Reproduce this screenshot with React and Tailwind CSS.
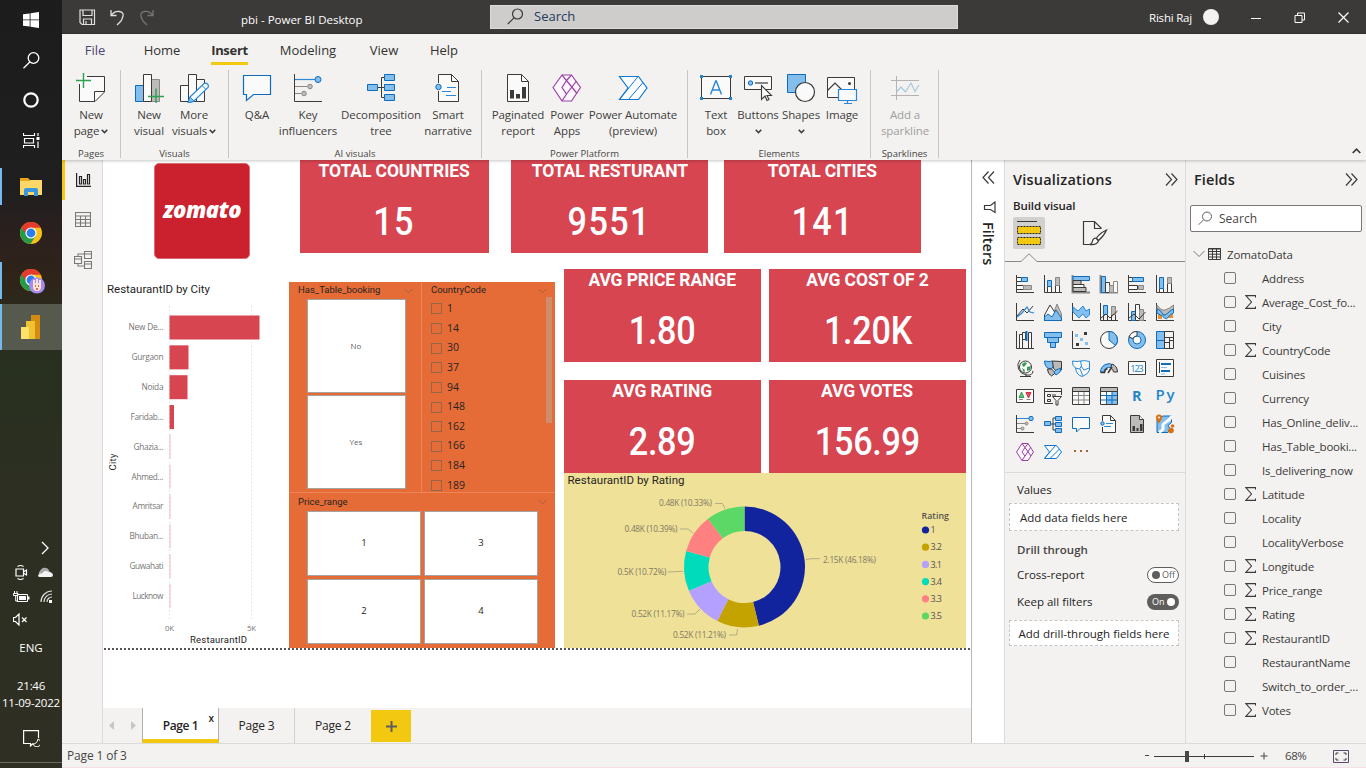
import React from "react";

const D = "#3b3a39";
const B = "#0f6cbd";
const L = "#83beec";
const G = "#bdbbb9";
const S = "#8a8886";

function Svg({ w = 18, h = w, children, className = "" }) {
  return (
    <svg width={w} height={h} viewBox={`0 0 ${w} ${h}`} fill="none" strokeWidth="1" className={`block shrink-0 ${className}`}>
      {children}
    </svg>
  );
}

/* ---------- Taskbar ---------- */

function ChromeLogo({ badge }) {
  return (
    <Svg w={28} h={26}>
      <circle cx="12" cy="12" r="11" fill="#fbc116" />
      <path d="M12 12L2.500 6.500A11 11 0 0 1 21.500 6.500H12Z" fill="#e33b2e" />
      <path d="M2.500 6.500A11 11 0 0 0 11.500 23L16.800 14.700 12 12Z" fill="#259a48" />
      <path d="M2.500 6.500L7.300 14.800 12 12V6.500Z" fill="#259a48" />
      <path d="M2.500 6.500A11 11 0 0 1 21.500 6.500H12L7.500 9.500 6.400 12.200Z" fill="#e33b2e" />
      <circle cx="12" cy="12" r="5.600" fill="#fff" />
      <circle cx="12" cy="12" r="4.400" fill="#2b7de9" />
      {badge && (
        <g>
          <circle cx="18" cy="17.500" r="8" fill="#a98bf0" />
          <path d="M15 12v7M18 11v6M21 12v7" stroke="#f1e6dc" strokeWidth="2" />
          <circle cx="18" cy="19" r="4" fill="#f6e5d3" />
          <path d="M16 18h1M19 18h1M17 21h2" stroke="#d2462f" strokeWidth="1.400" />
        </g>
      )}
    </Svg>
  );
}

function Taskbar() {
  return (
    <aside className="flex w-[62px] shrink-0 flex-col bg-[linear-gradient(#1c1c1c_0px,#1f1f1f_190px,#2b201e_235px,#2f2419_280px,#2a2c20_320px,#28301f_370px,#2c2f22_480px,#2f2f23_768px)] text-white">
      <div className="flex h-10 items-center justify-center">
        <Svg w={16}>
          <path d="M0 2.300L6.700 1.400V7.500H0ZM7.500 1.300L16 0V7.500H7.500ZM0 8.300H6.700V14.600L0 13.700ZM7.500 8.300H16V16L7.500 14.700Z" fill="#fff" />
        </Svg>
      </div>
      <div className="flex h-10 items-center justify-center">
        <Svg w={17}>
          <circle cx="10.500" cy="6" r="5.300" stroke="#fff" strokeWidth="1.300" />
          <path d="M6.800 10L.500 16.300" stroke="#fff" strokeWidth="1.300" />
        </Svg>
      </div>
      <div className="flex h-10 items-center justify-center">
        <Svg w={18}><circle cx="9" cy="9" r="6.700" stroke="#fff" strokeWidth="2.200" /></Svg>
      </div>
      <div className="flex h-10 items-center justify-center">
        <Svg w={17}>
          <path d="M.5 1v2.500h11V1M.5 16v-2.500h11V16M1.500 6.500h9v4.500h-9ZM15 1v3M15 9.500V16" stroke="#fff" strokeWidth="1.200" />
          <path d="M13.500 5h3v3h-3Z" fill="#fff" />
        </Svg>
      </div>
      <div className="mt-[3px] flex h-[47px] items-center">
        <div className="h-[37px] w-[2px] bg-[#76b9ed]" />
        <Svg w={22} h={18} className="ml-[18px]">
          <path d="M0 0h8l2 2h12v15H0Z" fill="#e9a51c" />
          <path d="M0 3h9l2-1h11v15H0Z" fill="#fdd868" />
          <path d="M4 18v-6a2 2 0 0 1 2-2h10a2 2 0 0 1 2 2v6h-4v-4H8v4Z" fill="#3a96dd" />
        </Svg>
      </div>
      <div className="flex h-[47px] items-center pl-[19px]"><ChromeLogo /></div>
      <div className="flex h-[47px] items-center">
        <div className="h-[37px] w-[2px] bg-[#76b9ed]" />
        <div className="ml-[17px]"><ChromeLogo badge /></div>
      </div>
      <div className="flex h-[46px] items-center bg-[#565a4e]">
        <div className="h-full w-[2px] bg-[#76b9ed]" />
        <Svg w={20} h={24} className="ml-[19px]">
          <path d="M10 0h9v24h-9Z" fill="#d58a10" />
          <path d="M5 6h9v18H5Z" fill="#efc22f" />
          <path d="M0 12h8v12H0Z" fill="#fbe06a" />
        </Svg>
      </div>
      <div className="mt-[191px] flex h-[14px] justify-end pr-[12px]">
        <Svg w={10} h={14}><path d="M2 1L8 7 2 13" stroke="#fff" strokeWidth="1.300" /></Svg>
      </div>
      <div className="mt-[8px] flex h-[18px] items-center pl-[15px]">
        <Svg w={13} h={17}>
          <path d="M1 5h7.500v7H1ZM9 7.500l2.500-1.500v5L9 9.500M2.500 2.500Q5.500.500 8.500 2.500M2.500 14.500Q5.500 16.500 8.500 14.500" stroke="#fff" strokeWidth="1.200" />
        </Svg>
        <Svg w={17} h={12} className="ml-[9px]">
          <path d="M3 10a3.500 3.500 0 0 1 0-5 5 5 0 0 1 8.500-1.500L14 8Z" fill="#a9a9a9" />
          <path d="M1 9.500Q2 7 5 7.500 8 3.500 11.500 6 15.500 6 16 9q0 2-2 2H3Q1 11 1 9.500Z" fill="#f3f3f3" />
        </Svg>
      </div>
      <div className="mt-[6px] flex h-[18px] items-center pl-[13px]">
        <Svg w={17} h={13}>
          <path d="M4.500 4.500h10v7h-10Z" stroke="#fff" />
          <path d="M6 6h7v4H6ZM15 6.500h1.500v3H15Z" fill="#fff" />
          <path d="M1.500 1v2M4 1v2M.5 3.500h4.500v2h-4.500ZM2.700 6v5h2" stroke="#fff" />
        </Svg>
        <Svg w={13} h={13} className="ml-[10px]">
          <path d="M1 12A11 11 0 0 1 12 1M4 12A8 8 0 0 1 12 4M7 12A5 5 0 0 1 12 7" stroke="#ddd" strokeWidth="1.200" />
          <path d="M9 10h3v3H9Z" fill="#fff" />
        </Svg>
      </div>
      <div className="mt-[6px] flex h-[16px] items-center pl-[13px]">
        <Svg w={15} h={13}><path d="M.5 4.500h2L6 1v11L2.500 8.500h-2ZM9 4.500l4.500 4.500M13.500 4.500L9 9" stroke="#fff" strokeWidth="1.200" /></Svg>
      </div>
      <div className="mt-[12px] flex h-[18px] items-center justify-center text-[11.500px]">ENG</div>
      <div className="mt-[20px] flex h-[17px] items-center justify-center text-[11.500px] tracking-[-0.3px]">21:46</div>
      <div className="flex h-[17px] items-center justify-center whitespace-nowrap text-[11.500px] tracking-[-0.2px]">11-09-2022</div>
      <div className="mt-[19px] flex h-[18px] justify-center">
        <Svg w={17}><path d="M10 13.500L7.500 16V13.500H.600V.600H15.500V8" stroke="#fff" strokeWidth="1.200" /><path d="M15 9a4 4 0 1 1-5 5q4 0 5-5Z" stroke="#fff" /></Svg>
      </div>
      <div className="mt-[14px] h-px bg-[#6a6b60]" />
    </aside>
  );
}

/* ---------- Title bar and ribbon ---------- */

function TitleBar() {
  return (
    <header className="flex h-[34px] shrink-0 items-center border-b border-[#33312f] bg-[#3b3a39] text-white">
      <Svg w={17} h={17} className="mt-[2px] ml-[17px]">
        <path d="M1 1h14.500v14.500H3L1 13.500ZM4 1v5.500h9V1M4.500 15v-5h8v5M7 12v3" stroke="#e1dfdd" strokeWidth="1.200" />
      </Svg>
      <Svg w={16} h={17} className="mt-[2px] ml-[14px]">
        <path d="M1 1v5.500h5.500M1.200 6.200Q5 1.500 9.500 2.500T13 7 11 12L7 16" stroke="#e1dfdd" strokeWidth="1.300" />
      </Svg>
      <Svg w={16} h={17} className="mt-[2px] ml-[13px]">
        <path d="M14 1v5.500H8.500M13.800 6.200Q10 1.500 5.500 2.500T2 7 4 12L8 16" stroke="#767472" strokeWidth="1.300" />
      </Svg>
      <div className="ml-[86px] w-[249px] whitespace-nowrap pt-[7px] text-[11.500px]">pbi - Power BI Desktop</div>
      <div className="flex h-6 w-[468px] items-center border border-[#dddbd9] bg-[#cfcdcb] text-[13px] text-[#243a5e]">
        <Svg w={17} h={17} className="ml-[16px]">
          <circle cx="10.500" cy="6" r="5" stroke="#3b3a39" strokeWidth="1.200" />
          <path d="M7 9.800L.800 16" stroke="#3b3a39" strokeWidth="1.200" />
        </Svg>
        <span className="ml-[10px] pt-px">Search</span>
      </div>
      <div className="ml-[191px] w-[54px] whitespace-nowrap pt-[2px] text-[11.500px] tracking-[-0.2px]">Rishi Raj</div>
      <div className="size-4 rounded-full bg-[#f3f2f1]" />
      <div className="mt-[3px] ml-[32px] h-px w-[10px] bg-white" />
      <Svg w={11} className="mt-[2px] ml-[33px]"><path d="M1 3.500h7v7H1ZM3.500 3.500V1h7v7H8" stroke="#fff" /></Svg>
      <Svg w={11} className="mt-[2px] ml-[33px]"><path d="M.5.500l10 10M10.500.500l-10 10" stroke="#fff" strokeWidth="1.200" /></Svg>
    </header>
  );
}

const icons = {
  newPage: (
    <Svg w={30}>
      <path d="M3 4h26v15L18.500 29H3Z" fill="#fafafa" />
      <path d="M11 3.500h17.500V19L19 28.500H3.500V11M28.500 18.500H18.500v10" stroke={D} />
      <path d="M0 7.500h15M7.500 0v15" stroke="#2f9e4f" strokeWidth="1.400" />
    </Svg>
  ),
  newVisual: (
    <Svg w={30}>
      <path d="M1.500 12.500h8v16h-8Z" fill={L} stroke={B} />
      <path d="M17.500 6.500h8v22h-8Z" fill={G} stroke={S} />
      <path d="M9.500 1.500h8v27h-8Z" fill="#fafafa" stroke={D} />
      <path d="M14 23.500h16M22 15.500v15" stroke="#2f9e4f" strokeWidth="1.400" />
    </Svg>
  ),
  moreVisuals: (
    <Svg w={30}>
      <path d="M1.500 12.500h8v16h-8ZM17.500 6.500h8v22h-8ZM9.500 1.500h8v27h-8Z" fill="#fafafa" stroke={D} />
      <path d="M11 24L25 10.500q2-1 3.500.5t.5 3.500L14.500 28.500 9 30Z" fill="#f5fafd" stroke="#2b88d8" strokeWidth="1.200" />
      <path d="M11 24l4 4-6 2ZM23 12.500l4 4" fill={L} stroke="#2b88d8" />
    </Svg>
  ),
  qa: <Svg w={30}><path d="M1.500 2.500h27v19H11.500L4.500 27.500v-6h-3Z" fill="#fafafa" stroke={B} strokeWidth="1.200" /></Svg>,
  key: (
    <Svg w={30}>
      <path d="M1.500 1v27.500H29" stroke={D} />
      <path d="M2 6.500h20" stroke="#2b88d8" strokeWidth="1.200" />
      <circle cx="25" cy="6.500" r="3" fill={L} stroke={B} />
      <path d="M2 13.500h12M2 20.500h6" stroke={S} />
      <circle cx="17" cy="13.500" r="2.300" fill={G} stroke={S} />
      <circle cx="11" cy="20.500" r="2.300" fill={G} stroke={S} />
    </Svg>
  ),
  tree: (
    <Svg w={30}>
      <path d="M11 14.500h7M18 4.500h-2.500v20H18" stroke={D} />
      <path d="M1.500 11.500h10v6h-10ZM18.500 1.500h10v6h-10ZM18.500 11.500h10v6h-10ZM18.500 21.500h10v6h-10Z" fill={L} stroke={B} />
    </Svg>
  ),
  smart: (
    <Svg w={30}>
      <path d="M5.500 10V1.500h13l7 7v20h-20V18" fill="#fafafa" stroke={D} />
      <path d="M18.500 1.500v7h7" stroke={D} />
      <circle cx="5.500" cy="14" r="2.700" fill={L} stroke={B} />
      <path d="M14 14.500h9M9 18.500h9M13 22.500h10" stroke="#2b88d8" />
    </Svg>
  ),
  report: (
    <Svg w={30}>
      <path d="M4.500 1.500h14l7 7v20h-21Z" fill="#fafafa" stroke={D} />
      <path d="M18.500 1.500v7h7" stroke={D} />
      <path d="M7 17h4v8.500H7ZM13 21h4v4.500h-4ZM19 14h4v11.500h-4Z" fill={D} />
    </Svg>
  ),
  apps: (
    <Svg w={30}>
      <path d="M10 2h9.500L28.500 14.500 19.500 28H10L1 14.500Z" fill="#fbf7fc" stroke="#9b3fa8" strokeWidth="1.200" strokeLinejoin="round" />
      <path d="M10 2L14.500 7.500 10 14.500 14.500 21 10 28M14.500 7.500L19.500 2M14.500 7.500l10.500 13M14.500 21L24.500 8" stroke="#9b3fa8" strokeWidth="1.200" />
    </Svg>
  ),
  automate: (
    <Svg w={30}>
      <path d="M1.500 3.500h19L29 15l-8.500 11.500h-19L10 15Z" fill="#fbfdff" stroke="#0f78d4" strokeWidth="1.200" />
      <path d="M1.500 26.500L16 8.500 20 3.500M10.500 26.500L25 9.500" stroke="#0f78d4" />
    </Svg>
  ),
  textBox: (
    <Svg w={32} h={30}>
      <path d="M1.500 3.500h29v22h-29Z" fill="#fafafa" stroke={D} />
      <path d="M0 2h3v3H0ZM29 2h3v3h-3ZM0 24h3v3H0ZM29 24h3v3h-3Z" fill="#1f87d0" />
      <path d="M10.500 21.500L15.700 8h.6L21.500 21.500M12.200 17h7.600" stroke="#2b88d8" strokeWidth="1.400" />
    </Svg>
  ),
  buttons: (
    <Svg w={30}>
      <path d="M1.500 3.500h27v13h-27Z" fill="#fafafa" stroke={D} />
      <circle cx="7.500" cy="10" r="2.200" fill={L} stroke={B} />
      <path d="M12 10h13" stroke={D} strokeWidth="1.200" />
      <path d="M18.500 12.500v14l3.500-3.500 2 4.500 2-1-2-4h4.500Z" fill="#fafafa" stroke={D} strokeWidth="1.100" />
    </Svg>
  ),
  shapes: (
    <Svg w={30}>
      <path d="M1.500 1.500h18v18h-18Z" fill={L} stroke={B} />
      <circle cx="19" cy="19" r="9.500" fill="#fafafa" stroke={D} strokeWidth="1.200" />
    </Svg>
  ),
  image: (
    <Svg w={32} h={32}>
      <path d="M1.500 4.500h27v20h-27Z" fill="#fafafa" stroke={D} />
      <path d="M1.500 17.500l7.500-7.500L17 18" stroke={D} strokeWidth="1.200" />
      <circle cx="23.500" cy="10.500" r="1.500" fill={D} />
      <path d="M12.500 16.500h18v11h-18Z" fill="#fafafa" stroke="#2b88d8" strokeWidth="1.200" />
      <path d="M21.500 27.500v3M18 30.500h8" stroke="#2b88d8" strokeWidth="1.200" />
    </Svg>
  ),
  spark: (
    <Svg w={30}>
      <path d="M1 7.500h28M1 22.500h28M6.500 3v24" stroke="#b5b3b1" />
      <path d="M6.500 19L11 14l4.500 5L21 10l4 8.500L29 12" stroke="#a7cbe2" strokeWidth="1.300" />
    </Svg>
  ),
};

const Caret = () => (
  <Svg w={7} h={5}><path d="M.7.800L3.500 3.600 6.300.800" stroke={D} strokeWidth="1.500" /></Svg>
);

function Item({ icon, a, b, width, caret, dim }) {
  return (
    <div className={`flex shrink-0 flex-col items-center whitespace-nowrap text-[11.500px] leading-4 tracking-[-0.1px] ${width} ${dim ? "text-[#a19f9d]" : "text-[#3f3e3c]"}`}>
      <div className="flex h-[34px] items-start justify-center">{icons[icon]}</div>
      <div className="h-4">{a}</div>
      <div className="flex h-4 items-center gap-[2px]">{b}{caret && <Caret />}</div>
    </div>
  );
}

function Group({ label, width, pad = "", children }) {
  return (
    <div className={`flex h-[88px] shrink-0 flex-col border-r border-[#c8c6c4] ${width}`}>
      <div className={`flex h-[76px] shrink-0 pt-[3px] ${pad}`}>{children}</div>
      <div className="h-[12px] text-center text-[9.500px] leading-[15px] text-[#484644]">{label}</div>
    </div>
  );
}

function Ribbon() {
  const tabs = [["File", "w-[66px]"], ["Home", "w-[68px]"], ["Insert", "w-[67px]"], ["Modeling", "w-[90px]"], ["View", "w-[62px]"], ["Help", "w-[58px]"]];
  return (
    <div className="relative z-10 h-[126px] shrink-0 bg-[#f3f2f1] shadow-[0_1px_3px_rgba(0,0,0,0.22)]">
      <nav className="flex h-[36px] text-[13px] text-[#323130]">
        {tabs.map(([t, w]) => (
          <div key={t} className={`flex justify-center ${w}`}>
            <span className={`h-[31px] pt-[6px] leading-5 ${t === "Insert" ? "border-b-[3px] border-[#f2c811] font-bold tracking-[-0.3px]" : ""} ${t === "File" ? "text-[#4a4670]" : ""}`}>{t}</span>
          </div>
        ))}
      </nav>
      <div className="flex">
        <Group label="Pages" width="w-[59px]"><Item icon="newPage" a="New" b="page" caret width="w-[58px]" /></Group>
        <Group label="Visuals" width="w-[108px]" pad="pl-[5px]">
          <Item icon="newVisual" a="New" b="visual" width="w-[46px]" />
          <Item icon="moreVisuals" a="More" b="visuals" caret width="w-[44px]" />
        </Group>
        <Group label="AI visuals" width="w-[253px]" pad="pl-[7px]">
          <Item icon="qa" a="Q&A" width="w-[42px]" />
          <Item icon="key" a="Key" b="influencers" width="w-[60px]" />
          <Item icon="tree" a="Decomposition" b="tree" width="w-[86px]" />
          <Item icon="smart" a="Smart" b="narrative" width="w-[48px]" />
        </Group>
        <Group label="Power Platform" width="w-[206px]" pad="pl-[6px]">
          <Item icon="report" a="Paginated" b="report" width="w-[60px]" />
          <Item icon="apps" a="Power" b="Apps" width="w-[38px]" />
          <Item icon="automate" a="Power Automate" b="(preview)" width="w-[94px]" />
        </Group>
        <Group label="Elements" width="w-[183px]" pad="pl-[7px]">
          <Item icon="textBox" a="Text" b="box" width="w-[42px]" />
          <Item icon="buttons" a="Buttons" caret width="w-[42px]" />
          <Item icon="shapes" a="Shapes" caret width="w-[44px]" />
          <Item icon="image" a="Image" width="w-[38px]" />
        </Group>
        <Group label="Sparklines" width="w-[68px]"><Item icon="spark" a="Add a" b="sparkline" dim width="w-[68px]" /></Group>
        <div className="ml-auto self-end pr-[5px]">
          <Svg w={9} h={6} className="mb-[4px]"><path d="M.7 5L4.500 1.200 8.300 5" stroke={D} strokeWidth="1.700" /></Svg>
        </div>
      </div>
    </div>
  );
}

/* ---------- Report canvas ---------- */

function Kpi({ title, value, width = "w-[197px]", className = "" }) {
  return (
    <div className={`flex h-[93px] shrink-0 flex-col items-center bg-[#d64550] font-[Roboto,sans-serif] text-white ${width} ${className}`}>
      <div className="mt-[1px] scale-x-[0.92] whitespace-nowrap text-[19px] leading-5 font-bold tracking-[-0.1px]">{title}</div>
      <div className={`mt-[18px] scale-x-90 text-[38px] leading-[46px] font-medium ${value.includes(".") ? "tracking-[-0.3px]" : "tracking-[1.500px]"}`}>{value}</div>
    </div>
  );
}

const cities = [["New De...", 90, 35], ["Gurgaon", 19, 32], ["Noida", 18, 22], ["Faridab...", 4.5, 33], ["Ghazia...", 1, 30], ["Ahmed...", 1, 32], ["Amritsar", 1, 31], ["Bhuban...", 1, 34], ["Guwahati", 1, 34], ["Lucknow", 1, 31]];

function BarChart() {
  return (
    <svg width="186" height="366" viewBox="103 282 186 366" className="block">
      <text x="107" y="293" textLength="103" fontSize="11.500" fontFamily="Roboto, sans-serif" fill="#252423">RestaurantID by City</text>
      <path d="M169.500 306V622M251.500 306V622" stroke="#d4d4d4" strokeDasharray="1 3" />
      {cities.map(([name, len, w], i) => (
        <g key={name}>
          <rect x="169.500" y={315.5 + i * 29.85} width={len} height="24" fill={i < 4 ? "#d64550" : "#f0b9bf"} />
          <text x="163.500" y={330.3 + i * 29.85} textAnchor="end" textLength={w} fontSize="8.300" fontFamily="'Open Sans', sans-serif" fill="#777573">{name}</text>
        </g>
      ))}
      <g fontSize="7.800" fontFamily="'Open Sans', sans-serif" fill="#777573" textAnchor="middle">
        <text x="169.500" y="631" textLength="9">0K</text>
        <text x="251.500" y="631" textLength="9">5K</text>
      </g>
      <text x="190" y="643" textLength="57" fontSize="9.500" fontFamily="Roboto, sans-serif" fill="#252423">RestaurantID</text>
      <text transform="translate(115.500 470.500) rotate(-90)" textLength="17" fontSize="9.500" fontFamily="Roboto, sans-serif" fill="#252423">City</text>
    </svg>
  );
}

const slices = [
  [46.18, "#12239e"], [11.21, "#c4a200"], [11.17, "#b3a0ff"], [10.72, "#00dcbb"], [10.39, "#ff8080"], [10.33, "#5cd867"],
];
const callouts = [
  ["2.15K (46.18%)", 823, 562.5, 53, "M806 559.500L811 558.700H820"],
  ["0.48K (10.33%)", 659, 506, 53, "M715 503.500H722.500L725 508.500"],
  ["0.48K (10.39%)", 624.5, 532, 53, "M680 529H688L693 533"],
  ["0.5K (10.72%)", 617.5, 575, 49, "M668 572L683 571.300"],
  ["0.52K (11.17%)", 631.5, 617, 53, "M687 614H695L700 609"],
  ["0.52K (11.21%)", 673, 638, 53, "M729 635H736.500L737.500 629"],
];
const legend = [["1", "#12239e"], ["3.2", "#c4a200"], ["3.1", "#b3a0ff"], ["3.4", "#00dcbb"], ["3.3", "#ff8080"], ["3.5", "#5cd867"]];

function Donut() {
  const cx = 744.5, cy = 567, R = 60.5, r = 36;
  let acc = 0;
  const pt = (rad, f) => `${cx + rad * Math.sin(2 * Math.PI * f)} ${cy - rad * Math.cos(2 * Math.PI * f)}`;
  return (
    <svg width="402" height="175" viewBox="564 473 402 175" className="block bg-[#efe198]">
      <text x="567.500" y="484" textLength="117" fontSize="11.500" fontFamily="Roboto, sans-serif" fill="#252423">RestaurantID by Rating</text>
      {slices.map(([v, c]) => {
        const a = acc / 100;
        acc += v;
        const b = acc / 100;
        return <path key={c} fill={c} d={`M${pt(R, a)}A${R} ${R} 0 0 1 ${pt(R, b)}L${pt(r, b)}A${r} ${r} 0 0 0 ${pt(r, a)}Z`} />;
      })}
      <g fontSize="8.300" fontFamily="'Open Sans', sans-serif" fill="#7f7a62">
        {callouts.map(([t, x, y, w, d]) => (
          <g key={t}>
            <path d={d} fill="none" stroke="#b5ad86" />
            <text x={x} y={y} textLength={w}>{t}</text>
          </g>
        ))}
      </g>
      <g fontFamily="'Open Sans', sans-serif" fill="#55534f">
        <text x="921.500" y="519" textLength="27.500" fontSize="8.800" fontWeight="600">Rating</text>
        {legend.map(([t, c], i) => (
          <g key={t}>
            <circle cx="925.500" cy={530 + i * 17.2} r="3.600" fill={c} />
            <text x="930.500" y={533.2 + i * 17.2} fontSize="9" textLength={t.length > 1 ? 11.5 : undefined}>{t}</text>
          </g>
        ))}
      </g>
    </svg>
  );
}

const Down = () => <Svg w={9} h={6}><path d="M.5.800L4.500 4.800 8.500.800" stroke="#a3633e" /></Svg>;
const Tile = ({ children, className = "" }) => (
  <div className={`flex items-center justify-center border border-[#a5a29f] bg-white ${className}`}>{children}</div>
);
const SlicerHead = ({ children, className = "" }) => (
  <div className={`flex items-center justify-between pr-[8px] pl-[9px] font-[Roboto,sans-serif] text-[9.500px] text-[#252423] ${className}`}>
    <span>{children}</span><Down />
  </div>
);

function Slicers() {
  return (
    <div className="mt-[13px] flex h-[366px] w-[266px] shrink-0 flex-col bg-[#e66c37]">
      <div className="flex h-[211px] border-b border-[#ec8558]">
        <div className="w-[133px] border-r border-[#ec8558]">
          <SlicerHead className="h-[17px]">Has_Table_booking</SlicerHead>
          <Tile className="ml-[17.500px] h-[94px] w-[99px] text-[8px] text-[#666]">No</Tile>
          <Tile className="mt-[2px] ml-[17.500px] h-[94px] w-[99px] text-[8px] text-[#666]">Yes</Tile>
        </div>
        <div className="w-[133px] overflow-hidden">
          <SlicerHead className="h-[17px]">CountryCode</SlicerHead>
          <div className="flex justify-between pr-[3px] pl-[9px]">
            <div className="text-[10.500px] text-[#252423]">
              {["1", "14", "30", "37", "94", "148", "162", "166", "184", "189"].map((c) => (
                <div key={c} className="flex h-[19.650px] items-center">
                  <span className="mr-[5px] size-[11px] border border-[#94674b]" />{c}
                </div>
              ))}
            </div>
            <div className="mt-[-2px] h-[126px] w-[6px] bg-[#cf8d6c]" />
          </div>
        </div>
      </div>
      <SlicerHead className="h-[18px]">Price_range</SlicerHead>
      <div className="ml-[18px] grid grid-cols-[114px_114px] grid-rows-[65px_65px] gap-[3px] text-[9.500px] text-[#252423]">
        {["1", "3", "2", "4"].map((v) => <Tile key={v}>{v}</Tile>)}
      </div>
    </div>
  );
}

function Canvas() {
  return (
    <div className="h-[548px] bg-white">
      <div className="flex h-[109px] items-start">
        <div className="mt-[3px] ml-[51px] flex size-24 items-center justify-center rounded-[5px] border border-[#dc6a74] bg-[#cb202d] font-['Open_Sans',sans-serif] text-[22px] font-extrabold tracking-[-0.5px] text-white italic">
          <span className="pb-[4px]">zomato</span>
        </div>
        <Kpi title="TOTAL COUNTRIES" value="15" width="w-[189px]" className="ml-[50px]" />
        <Kpi title="TOTAL RESTURANT" value="9551" className="ml-[22px]" />
        <Kpi title="TOTAL CITIES" value="141" className="ml-[16px]" />
      </div>
      <div className="flex h-[379px]">
        <div className="mt-[13px] w-[186px]"><BarChart /></div>
        <Slicers />
        <div className="ml-[9px] w-[402px]">
          <div className="grid grid-cols-[197px_197px] gap-x-[8px] gap-y-[18px]">
            <Kpi title="AVG PRICE RANGE" value="1.80" />
            <Kpi title="AVG COST OF 2" value="1.20K" />
            <Kpi title="AVG RATING" value="2.89" />
            <Kpi title="AVG VOTES" value="156.99" />
          </div>
          <Donut />
        </div>
      </div>
      <div className="mx-px h-[2px] bg-[repeating-linear-gradient(90deg,#555_0px,#555_2px,#fff_2px,#fff_4px)]" />
    </div>
  );
}

function PageTabs() {
  return (
    <div className="flex h-[35px] items-stretch bg-[#f3f2f1] text-[12px] text-[#252423]">
      <div className="flex w-[39px] items-center justify-between pr-[6px] pl-[6px]">
        <Svg w={5} h={9}><path d="M5 0v9L0 4.500Z" fill="#c8c6c4" /></Svg>
        <Svg w={5} h={9}><path d="M0 0v9l5-4.500Z" fill="#c8c6c4" /></Svg>
      </div>
      <div className="relative flex w-[77px] items-center justify-center border-x border-b-4 border-x-[#b3b0ad] border-b-[#f2c811] bg-white pt-[4px] font-semibold tracking-[-0.4px]">
        Page 1
        <span className="absolute top-[4px] right-[4.500px] text-[10px] leading-3">x</span>
      </div>
      <div className="flex w-[76px] items-center justify-center border-r border-[#d2d0ce] tracking-[-0.2px]">Page 3</div>
      <div className="flex w-[76px] items-center justify-center tracking-[-0.2px]">Page 2</div>
      <div className="mt-[2px] flex h-[32px] w-[40px] items-center justify-center bg-[#f2c811]">
        <Svg w={11}><path d="M5.500 0v11M0 5.500h11" stroke="#605e5c" strokeWidth="2" /></Svg>
      </div>
    </div>
  );
}

function ViewRail() {
  return (
    <div className="flex w-[41px] shrink-0 flex-col border-r border-[#dddbd9] bg-[#f3f2f1]">
      <div className="flex h-[40px] items-center border-l-[3px] border-[#f2c811] pl-[11px]">
        <Svg w={15} h={14}><path d="M.6 0v13.400H15M3.500 3.500h2v7.500h-2ZM7.500 6.500h2V11h-2ZM11.500 1.500h2V11h-2Z" stroke="#252423" strokeWidth="1.200" /></Svg>
      </div>
      <div className="flex h-[38px] items-center pl-[13px]">
        <Svg w={16} h={15}><path d="M.5.500h15v14H.5ZM.5 4h15M.5 7.500h15M.5 11h15M5.500 4v10.500M10.500 4v10.500" stroke="#7a7876" strokeWidth="1.100" /></Svg>
      </div>
      <div className="flex h-[44px] items-center pl-[12px]">
        <Svg w={18}><path d="M10.500.500h7v7h-7ZM.5 5.500h7v7h-7ZM10.500 10.500h7v7h-7ZM10.500 3H4v2.500M4 12.500V15h6.500M10.500 3h7M.5 8h7M10.500 13h7" stroke="#7a7876" strokeWidth="1.100" /></Svg>
      </div>
    </div>
  );
}

/* ---------- Panes ---------- */

const Chev = ({ left }) => (
  <Svg w={13} h={13}>
    <path d={left ? "M6.500.500L1 6.500l5.500 6M12 .500L6.500 6.500l5.500 6" : "M1 .500l5.500 6-5.500 6M6.500.500l5.500 6-5.500 6"} stroke={D} strokeWidth="1.200" />
  </Svg>
);

function FiltersPane() {
  return (
    <div className="flex w-[33px] shrink-0 flex-col items-center border-l border-[#bab8b6] bg-white pt-[11px]">
      <Chev left />
      <Svg w={13} h={13} className="mt-[17px] ml-[3px]"><path d="M12 1v10.500L7.500 8.500H1.500v-4h6Z" stroke={D} strokeWidth="1.200" /></Svg>
      <div className="mt-[8px] text-[14.500px] leading-4 font-semibold text-[#252423] [writing-mode:vertical-rl]">Filters</div>
    </div>
  );
}

const axis = <path d="M.5 0v17.500H18" stroke={D} />;
const W = "#fafafa";
const visuals = [
  <>{axis}<path d="M.5 2.500h5v4h-5Z" fill={W} stroke={D} /><path d="M5.500 2.500h6v4h-6Z" fill={L} stroke={B} /><path d="M.5 10.500h7v4h-7Z" fill={W} stroke={D} /><path d="M7.500 10.500h8v4h-8Z" fill={G} stroke={S} /></>,
  <>{axis}<path d="M3.500 11.500h4v6h-4ZM11.500 9.500h4v8h-4Z" fill={W} stroke={D} /><path d="M3.500 5.500h4v6h-4Z" fill={L} stroke={B} /><path d="M11.500 2.500h4v8h-4Z" fill={G} stroke={S} /></>,
  <><path d="M.5 0v17.500H18" stroke={S} strokeWidth="2" /><path d="M1 1.500h16.500v4H1Z" fill={L} stroke={B} /><path d="M1 5.500h8v4H1Z" fill={G} stroke={D} /><path d="M1 9.500h11v3H1Z" fill={W} stroke={D} /><path d="M1 12.500h13v4H1Z" fill={G} stroke={D} /></>,
  <><path d="M.5 0v17.500H18" stroke={S} strokeWidth="2" /><path d="M1.500 1.500h4v16h-4Z" fill={L} stroke={B} /><path d="M5.500 7.500h4v10h-4Z" fill={W} stroke={D} /><path d="M9.500 10.500h4v7h-4Z" fill={G} stroke={S} /><path d="M13.500 6.500h4v11h-4Z" fill={W} stroke={S} /></>,
  <>{axis}<path d="M.5 2.500h4v4h-4Z" fill={W} stroke={D} /><path d="M4.500 2.500h11v4h-11Z" fill={L} stroke={B} /><path d="M.5 10.500h9v4h-9Z" fill={W} stroke={D} /><path d="M10.500 10.500h5v4h-5Z" fill={G} stroke={S} /></>,
  <>{axis}<path d="M3.500 13.500h4v4h-4ZM11.500 8.500h4v9h-4Z" fill={W} stroke={D} /><path d="M3.500 2.500h4v11h-4Z" fill={L} stroke={B} /><path d="M11.500 2.500h4v6h-4Z" fill={G} stroke={S} /></>,
  <>{axis}<path d="M1 13L7 6l4 4 6-7" stroke={D} /><path d="M1 14l5-4 5-6 3 5 4 1" stroke="#2b88d8" strokeWidth="1.200" /></>,
  <><path d="M7 17L13 1l4.500 10v6.500Z" fill={G} stroke={S} /><path d="M.5 12L6 2l6 9-4 6.500H.5Z" fill={W} stroke={D} /><path d="M.5 17.500V14L4 11l4 3 4-7 5.500 8v2.500Z" fill={L} stroke={B} /></>,
  <>{axis}<path d="M1 4l5 4 5-5 3 5 3.500-2v6l-3.500 3-3-4-4 4-6-6Z" fill={L} stroke="#2b88d8" /></>,
  <>{axis}<path d="M3.500 2.500h4v9h-4Z" fill={L} stroke={B} /><path d="M11.500 3.500h4v8h-4Z" fill={G} stroke={S} /><path d="M3.500 12v5.500h4V12M11.500 12v5.500h4V12M1 15l5-4 4 4 7.500-7" stroke={D} /></>,
  <>{axis}<path d="M3.500 8.500h4v9h-4Z" fill={L} stroke={B} /><path d="M7.500 1.500h4v16h-4Z" fill={W} stroke={D} /><path d="M11.500 6.500h4v11h-4Z" fill={G} stroke={S} /><path d="M1 15l5-4 5 5 6.500-7" stroke={D} /></>,
  <>{axis}<path d="M2 10h4v6H2ZM12 10h5v5h-5Z" fill="#e8912d" /><path d="M1 2Q5 8 9 7T17.500 2v4Q12 12 9 12T1 7Z" fill={G} stroke={S} /><path d="M1 6q4 1 5 4t3 2 4-3 4.500-3v4q-3 1-5 4t-4 1-4-3-3.500-2Z" fill={L} stroke={B} /></>,
  <>{axis}<path d="M3.500 3.500h3v14h-3ZM12.500 1.500h3v16h-3Z" fill={W} stroke={D} /><path d="M6.500 1.500h3v7h-3Z" fill={W} stroke={D} /><path d="M10.500 0v10" stroke={B} strokeWidth="2" /></>,
  <><path d="M.5 1.500h17v5H.5ZM3.500 6.500h11v5h-11ZM6.500 11.500h5v5h-5Z" fill={L} stroke={B} /></>,
  <>{axis}<path d="M3 3h3v3H3ZM8 7h3v3H8ZM13 11h3v3h-3Z" fill={L} /><path d="M12 1h3v3h-3ZM4 12h3v3H4Z" fill={D} /></>,
  <><circle cx="9" cy="9" r="8.500" fill={W} stroke={D} /><path d="M9 9V.500A8.500 8.500 0 0 1 15.500 14.500Z" fill={L} stroke={B} /></>,
  <><circle cx="9" cy="9" r="6.300" stroke={L} strokeWidth="4.500" /><circle cx="9" cy="9" r="8.500" stroke={B} /><circle cx="9" cy="9" r="4" fill={W} stroke={B} /><path d="M9 .500A8.500 8.500 0 0 0 1 6l4 1.500A4 4 0 0 1 9 5Z" fill={W} stroke={D} /></>,
  <><path d="M.5.500h8v17h-8Z" fill={L} stroke={B} /><path d="M.5 9.500h8" stroke={B} /><path d="M8.500.500h9v17h-9ZM8.500 6.500h9M13.500 6.500v11M8.500 11.500h5M13.500 9.500h4" stroke={D} /></>,
  <><circle cx="9.500" cy="8" r="6" fill={W} stroke={D} /><path d="M6 5q3-3 5-1l-2 3-2 1ZM11 8l4-1-1 4-3 1ZM6 9l3 2-1 3Z" fill="#3b9b55" /><path d="M4 1Q.5 5 2.500 10t8 6T17 12M10 15v2.500M4 17.500h11" stroke={D} /></>,
  <><path d="M.5 2q5 1 8 0l1 5-2 3-4-1q-3-2-3-7Z" fill={L} stroke={B} /><path d="M8.500 2L17.500 2.500V11l-5 1-3-2.500Z" fill={G} stroke={D} /><path d="M3.500 10l4 0 4 4-4 3q-4-2-4-7Z" fill={G} stroke={D} /><path d="M12 11l5-2-1 4-4 3-2-3Z" fill={L} stroke={B} /></>,
  <><path d="M.5 2q5 1 8 0t9 .5V11q-1 4-7 6.500-6-1-7-8.500Q0 7 .5 2Z" fill={W} stroke="#2b88d8" /><path d="M8.500 2l1 5-2 3-4-1M9 7l3 4 5-2M8 10l3 7" stroke="#2b88d8" /></>,
  <><path d="M.5 13a8.500 8.500 0 0 1 13-7l-3 3a4 4 0 0 0-6 4Z" fill={L} stroke={B} /><path d="M12 5a8.500 8.500 0 0 1 5.500 8h-4q0-3-3-4Z" fill={G} stroke={D} /><path d="M.5 13.500h4a4 4 0 0 1 3-4M8 14l4-6" stroke={D} strokeWidth="1.500" /></>,
  <><path d="M.5 2.500h17v13H.5Z" fill={W} stroke={D} /><text x="2.200" y="12.500" fontSize="9.500" textLength="13.500" fontFamily="'Open Sans', sans-serif" fill="#1f87d0">123</text></>,
  <><path d="M.5.500h17v17H.5Z" fill={W} stroke={D} /><path d="M3.500 3v11" stroke={D} /><path d="M5 5h10M5 12h9" stroke={B} strokeWidth="1.800" /><path d="M5 8.500h6M5 15h4" stroke={L} /></>,
  <><path d="M.5 2.500h17v13H.5Z" fill={W} stroke={D} /><path d="M3 10.500L5.500 5 8 10.500Z" fill="#6cc17e" stroke="#2f9e4f" /><path d="M10 5.500h5L12.500 11Z" fill="#e7505a" stroke="#c4314b" /><path d="M3 12.500h4M10.500 12.500h4" stroke={S} /></>,
  <><path d="M9 16.500H.5V1.500h17V8M.5 4.500h17M3.500 7.500h3v2h-3ZM3.500 12.500h3v2h-3ZM8 8h4" stroke={D} /><path d="M8.500 9.500h9l-3.500 4V18h-2v-4.500Z" fill={W} stroke={D} /></>,
  <><path d="M.5.500h17v17H.5Z" fill={W} /><path d="M.5 1h17v3H.5Z" fill={G} /><path d="M.5 8.500h17M.5 13h17M6.500 4v13.500M12 4v13.500" stroke={S} /><path d="M.5.500h17v17H.5ZM.5 4.500h17" stroke={D} /></>,
  <><path d="M.5.500h17v17H.5Z" fill={W} /><path d="M6 9h11.500v8.500H6ZM12 5h5.500v5H12Z" fill={L} /><path d="M.5 1h17v3H.5Z" fill={G} /><path d="M.5 8.500h17M.5 13h17M6.500 4v13.500M12 4v13.500" stroke={B} /><path d="M.5.500h17v17H.5ZM.5 4.500h17" stroke={D} /></>,
  <text x="4" y="14" fontSize="14.500" fontWeight="700" fontFamily="'Open Sans', sans-serif" fill="#1f87c8">R</text>,
  <text x="-.5" y="13" fontSize="15" fontWeight="600" textLength="19" fontFamily="'Open Sans', sans-serif" fill="#1f87c8">Py</text>,
  <>{axis}<path d="M1 3.500h12" stroke="#2b88d8" /><circle cx="15" cy="3.500" r="2.200" fill={L} stroke={B} /><path d="M1 8.500h8M1 13.500h4" stroke={S} /><circle cx="10.500" cy="8.500" r="1.500" fill={G} stroke={S} /><circle cx="6.500" cy="13.500" r="1.500" fill={G} stroke={S} /></>,
  <><path d="M6 9h5M11.500 3H9v12h2.500" stroke={D} /><path d="M.5 6.500h6v4h-6ZM11.500 1.500h6v4h-6ZM11.500 7.500h6v4h-6ZM11.500 13.500h6v4h-6Z" fill={L} stroke={B} /></>,
  <path d="M.5 2.500h17v11H8L4.500 17v-3.500h-4Z" fill={W} stroke={B} />,
  <><path d="M2.500 6V.500h8l5 5v12h-13V12M10.500.500v5h5" fill={W} stroke={D} /><circle cx="2.500" cy="8.500" r="1.700" fill={L} stroke={B} /><path d="M6 8.500h7M4 11.500h7" stroke="#2b88d8" /></>,
  <><path d="M2.500.500h9l4 4v13h-13Z" fill={G} stroke={D} /><path d="M11.500.500v4h4" fill={W} stroke={D} /><path d="M4.500 11h2.500v5H4.500ZM8.500 13h2v3h-2ZM12 9h2.500v7H12Z" fill={D} /></>,
  <><path d="M1 4v13.500h11l2-4-2-3 3.500-3V1H7Z" fill={L} stroke={B} /><path d="M3 17q5-2 4-5t3-5 6-6" stroke={W} strokeWidth="3" /><path d="M3-.500a3 3 0 0 1 3 3Q6 5 3 8.500 0 5 0 2.500a3 3 0 0 1 3-3Z" fill="#d8700f" /><circle cx="3" cy="2.500" r="1" fill={W} /><circle cx="16.500" cy="11" r="1.800" fill="#d8700f" /><circle cx="15" cy="15.500" r="2.800" fill="#d8700f" /></>,
  <><path d="M6 .500h6L17.500 9 12 17.500H6L.5 9Z" fill="#fbf7fc" stroke="#9b3fa8" /><path d="M6 .500l3 4L6 9l3 4-3 4.500M9 4.500L12 .500M9 4.500l6 8.500M9 13l6-9" stroke="#9b3fa8" /></>,
  <><path d="M.5 2.500h12L17.500 9l-5 6.500H.5L5.500 9Z" fill="#fbfdff" stroke="#0f78d4" /><path d="M.5 15.500l11-13M6 15.500L15.500 6" stroke="#0f78d4" /></>,
  <path d="M2 7h2v2H2ZM8 7h2v2H8ZM14 7h2v2h-2Z" fill="#9a6a3a" />,
];

function Visualizations() {
  return (
    <section className="flex w-[181px] shrink-0 flex-col border-l border-[#dddbd9] bg-[#f3f2f1] text-[#252423]">
      <div className="flex h-[39px] items-center justify-between pr-[7px] pl-[8px]">
        <h2 className="text-[14.500px] font-semibold tracking-[0.2px]">Visualizations</h2>
        <Chev />
      </div>
      <div className="h-[18px] pl-[8px] text-[11.500px] leading-[14px] font-semibold tracking-[-0.1px]">Build visual</div>
      <div className="flex h-[32px] pl-[8px]">
        <div className="flex size-8 items-center justify-center rounded-[2px] bg-[#d2d0ce]">
          <Svg w={24} h={26}>
            <path d="M0 1.500h20" stroke={D} />
            <path d="M.5 6.500h23v7H.5ZM.5 17.500h23v7H.5Z" fill="#f2c811" stroke="#252423" strokeDasharray="2 1" />
          </Svg>
        </div>
        <Svg w={26} h={26} className="mt-[3px] ml-[37px]">
          <path d="M9 24.500H1.500v-23h11l7 7M12.500 1.500v7h7" stroke={D} strokeWidth="1.200" />
          <path d="M24.500 10Q18 13 14.500 18l2 2.500Q22 16 24.500 10ZM14 18q-3 0-3.500 3t-3 3.500q7 1 9-3.500Z" fill={W} stroke={D} strokeWidth="1.200" />
        </Svg>
      </div>
      <Svg w={180} h={13} className="mt-[4px]">
        <path d="M0 8.500H16L24 .800 32 8.500H180" stroke="#8a8886" />
      </Svg>
      <div className="mt-[9px] grid grid-cols-[repeat(6,18px)] gap-[10px] pl-[11px]">
        {visuals.map((v, i) => <Svg key={i} className="overflow-visible">{v}</Svg>)}
      </div>
      <div className="mt-[11px] border-t border-[#dddbd9] pt-[9px] pl-[12px] text-[11.500px] leading-[16px] tracking-[-0.1px]">Values</div>
      <div className="mt-[5px] ml-[4px] flex h-[28px] w-[170px] items-center border border-dashed border-[#c8c6c4] bg-white pt-px pl-[10px] text-[11.500px]">Add data fields here</div>
      <div className="mt-[10px] pl-[12px] text-[11.500px] leading-[18px] font-semibold text-[#484644]">Drill through</div>
      <div className="mt-[6px] flex h-[20px] items-center justify-between pr-[6px] pl-[12px] text-[11.500px]">
        Cross-report
        <div className="flex h-4 w-8 items-center gap-[2px] rounded-full border border-[#605e5c] bg-white pl-[4px] text-[9px] text-[#605e5c]">
          <span className="size-[8px] shrink-0 rounded-full bg-[#605e5c]" />Off
        </div>
      </div>
      <div className="mt-[7px] flex h-[20px] items-center justify-between pr-[6px] pl-[12px] text-[11.500px]">
        Keep all filters
        <div className="flex h-4 w-8 items-center gap-[2px] rounded-full bg-[#605e5c] pl-[5px] text-[9px] text-white">
          On<span className="size-[8px] shrink-0 rounded-full bg-white" />
        </div>
      </div>
      <div className="mt-[8px] ml-[4px] flex h-[26px] w-[170px] items-center justify-center border border-dashed border-[#c8c6c4] bg-white pt-px text-[11.500px] whitespace-nowrap">Add drill-through fields here</div>
    </section>
  );
}

const fields = [["Address"], ["Average_Cost_fo...", 1], ["City"], ["CountryCode", 1], ["Cuisines"], ["Currency"], ["Has_Online_deliv..."], ["Has_Table_booki..."], ["Is_delivering_now"], ["Latitude", 1], ["Locality"], ["LocalityVerbose"], ["Longitude", 1], ["Price_range", 1], ["Rating", 1], ["RestaurantID", 1], ["RestaurantName"], ["Switch_to_order_..."], ["Votes", 1]];

function Fields() {
  return (
    <section className="flex flex-1 flex-col border-l border-[#dddbd9] bg-[#f3f2f1] text-[#3b3a39]">
      <div className="flex h-[39px] items-center justify-between pr-[8px] pl-[8px] text-[#252423]">
        <h2 className="text-[14.500px] font-semibold tracking-[0.1px]">Fields</h2>
        <Chev />
      </div>
      <div className="mt-[6px] ml-[4px] flex h-[27px] w-[172px] items-center rounded-[2px] border border-[#7a7876] bg-white text-[12px] text-[#484644]">
        <Svg w={15} className="ml-[7px]">
          <circle cx="9" cy="5.500" r="4.500" stroke="#605e5c" /><path d="M5.700 8.700L.700 13.700" stroke="#605e5c" />
        </Svg>
        <span className="ml-[6px] pt-px">Search</span>
      </div>
      <div className="mt-[10px] flex h-[24px] items-center pl-[7px] text-[11.500px] tracking-[-0.1px]">
        <Svg w={12} h={8}><path d="M.5 1L6 6.500 11.500 1" stroke="#7a7876" /></Svg>
        <Svg w={13} h={12} className="mr-[6px] ml-[3px]"><path d="M.5.500h12v11H.5ZM.5 3.500h12M.5 6.200h12M.5 9h12M4.500 1v10.500M8.500 1v10.500M.5 1h12" stroke={D} /></Svg>
        <span className="pt-px">ZomatoData</span>
      </div>
      {fields.map(([name, sum]) => (
        <div key={name} className="flex h-[24px] items-center pt-px pl-[38px] text-[11.500px] tracking-[-0.2px] whitespace-nowrap">
          <span className="mb-[2px] size-[12px] rounded-[2px] border border-[#7a7876]" />
          <span className="w-[26px] pb-[2px] pl-[9px]">
            {sum && <Svg w={11} h={14}><path d="M10.500 2.500V.600H.800L6.500 7 .800 13.400H10.500V11.500" stroke={D} strokeWidth="1.100" /></Svg>}
          </span>
          {name}
        </div>
      ))}
    </section>
  );
}

function StatusBar() {
  return (
    <footer className="flex h-[25px] shrink-0 items-center border-t border-b border-t-[#dddbd9] border-b-[#f5dfe2] bg-[#f3f2f1] pl-[5px] text-[12px] text-[#484644]">
      <span className="tracking-[-0.15px]">Page 1 of 3</span>
      <div className="ml-auto flex items-center">
        <div className="h-[1.500px] w-[4px] bg-[#484644]" />
        <Svg w={100} h={12} className="ml-[5px]">
          <path d="M0 6.500h100M50.500 4v5" stroke={D} />
          <path d="M31 1h4v11h-4Z" fill="#484644" />
        </Svg>
        <Svg w={8} className="ml-[6px]"><path d="M4 .500v7M.5 4h7" stroke="#484644" /></Svg>
        <span className="ml-[17px] w-[23px] text-[11.500px] tracking-[-0.4px]">68%</span>
        <Svg w={16} h={13} className="mt-[2px] mr-[17px] ml-[25px]"><path d="M.5.500h15v12H.5Z" stroke="#5b4a70" /><path d="M3 5V3h2.500M10.500 3H13v2M13 8v2h-2.500M5.500 10H3V8" stroke={D} /></Svg>
      </div>
    </footer>
  );
}

export default function App() {
  return (
    <div className="flex h-[768px] w-[1366px] overflow-hidden bg-white font-['Open_Sans','Noto_Sans',sans-serif]">
      <Taskbar />
      <div className="flex min-w-0 flex-1 flex-col">
        <TitleBar />
        <Ribbon />
        <div className="flex h-[583px] shrink-0">
          <ViewRail />
          <main className="flex w-[868px] shrink-0 flex-col"><Canvas /><PageTabs /></main>
          <FiltersPane />
          <Visualizations />
          <Fields />
        </div>
        <StatusBar />
      </div>
    </div>
  );
}
